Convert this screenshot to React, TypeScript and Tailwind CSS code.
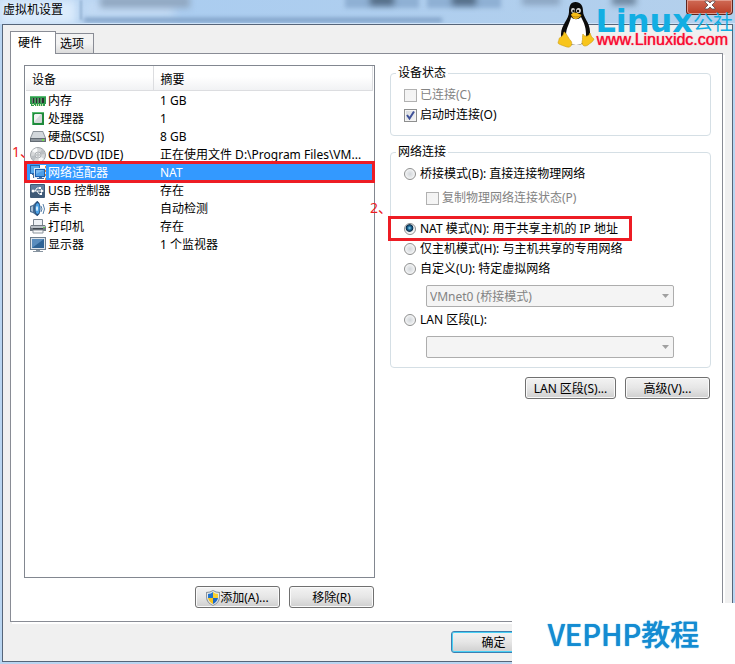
import React from 'react';

const RAM = () => (
  <svg viewBox="0 0 16 16" className="h-4 w-4">
    <path d="M0 3h16v8h-1v2H5v-1H4v1H1v-2H0z" fill="#2f9a4d" />
    <path d="M0 3h16v1H0z" fill="#59bd72" />
    <path d="M2 5h2v5H2zM5 5h2v5H5zM8 5h2v5H8zM11 5h3v5h-3z" fill="#26352c" />
    <path d="M2 5h1v5H2zM5 5h1v5H5zM8 5h1v5H8zM11 5h1v5h-1z" fill="#6d7d73" />
    <path d="M2 11h2v1H2zM6 11h1v2H6zM8 11h1v2H8zM10 11h1v2h-1zM12 11h1v2h-1z" fill="#c9e7a8" />
  </svg>
);

const Cpu = () => (
  <svg viewBox="0 0 16 16" className="h-4 w-4">
    <rect x="2" y="1" width="12" height="13" fill="#1f8a3c" />
    <path d="M2 1h12v1H3v12H2z" fill="#58bd70" />
    <path d="M5 3h6l1 1v7l-1 1H5l-1-1V4z" fill="#f1f2f2" />
    <path d="M11 3l1 1v7l-1 1H5l-1-1z" fill="#d5d8da" />
  </svg>
);

const Disk = () => (
  <svg viewBox="0 0 16 16" className="h-4 w-4">
    <path d="M3 2h10l3 7v4H0V9z" fill="#8b9299" />
    <path d="M3.500 3h9L15 9H1z" fill="#d3d8dc" />
    <path d="M0 9h16v4H0z" fill="#646c74" />
    <path d="M1 10h14v2H1z" fill="#8d959c" />
    <rect x="12" y="10" width="2" height="2" fill="#72e04a" />
  </svg>
);

const Disc = () => (
  <svg viewBox="0 0 16 16" className="h-4 w-4">
    <circle cx="8" cy="8" r="7.500" fill="#d6d8da" stroke="#a1a5a9" />
    <path d="M8 8L2 4a7 7 0 0 1 5-3zM8 8l6 4a7 7 0 0 1-5 3z" fill="#f8f9fa" />
    <path d="M8 8L1 9a7 7 0 0 0 3 4.500zM8 8l7-1a7 7 0 0 0-3-4.500z" fill="#bbbfc3" />
    <circle cx="8" cy="8" r="3" fill="#e8eaec" stroke="#adb1b5" />
    <circle cx="8" cy="8" r="1.200" fill="#fff" stroke="#777d83" strokeWidth=".6" />
  </svg>
);

const Net = () => (
  <svg viewBox="0 0 16 16" className="h-4 w-4">
    <path d="M0 0h16v16H0z" fill="#fff" />
    <path d="M0 0h10v9H0z" fill="#2468b0" />
    <path d="M1 1h8v7H1z" fill="#5aaaea" />
    <path d="M2 9h2v3h2v1H3v-3H2z" fill="#4d6f94" />
    <path d="M4 3h12v10H4z" fill="#dbe9f6" />
    <path d="M5 4h10v8H5z" fill="#1b5fae" />
    <path d="M6 5h8v6H6z" fill="#4f9fe6" />
    <path d="M6 5h8L6 9z" fill="#76b9f0" />
    <path d="M9 12h3v1h2v1H7v-1h2z" fill="#3c6ea5" />
    <path d="M15 1h1v2h-1zM15 5h1v2h-1zM15 9h1v2h-1zM15 13h1v2h-1z" fill="#e58a3a" />
  </svg>
);

const Usb = () => (
  <svg viewBox="0 0 16 16" className="h-4 w-4">
    <rect x="0" y="1" width="15" height="14" rx="1" fill="#3f5a77" />
    <path d="M1 2h13v5H1z" fill="#5f7d9c" />
    <g stroke="#fff" fill="none">
      <path d="M3 8h9M5 8l2-3h3M7 8l2 3h2" />
    </g>
    <path d="M11 6l3 2-3 2zM9 4h2v2H9zM10 10h2v2h-2z" fill="#fff" />
    <circle cx="3" cy="8" r="1.500" fill="#fff" />
  </svg>
);

const Sound = () => (
  <svg viewBox="0 0 16 16" className="h-4 w-4">
    <path d="M0 5l3-1 4-4h1v15H7l-4-3-3-1z" fill="#4a6d92" />
    <path d="M1 6l2-1v6l-2-1z" fill="#a9bfd4" />
    <ellipse cx="7.500" cy="7.500" rx="3" ry="7" fill="#274f7c" />
    <ellipse cx="7.500" cy="7.500" rx="2.200" ry="5.500" fill="#4aa0e4" />
    <ellipse cx="7" cy="7.500" rx="1" ry="2.500" fill="#d8efff" />
    <path d="M11 5q2 3 0 6M13 3q3 5 0 10" stroke="#567fa9" fill="none" />
  </svg>
);

const Printer = () => (
  <svg viewBox="0 0 16 16" className="h-4 w-4">
    <path d="M3.500.5h9v6h-9z" fill="#eef2f6" stroke="#7c8791" />
    <path d="M1 6h14l1 2v4H0V8z" fill="#717a83" />
    <path d="M1 7h14v2H1z" fill="#b9c0c7" />
    <path d="M3 9h10v2H3z" fill="#3e464e" />
    <path d="M3 11h10v3H3z" fill="#f8f9fa" stroke="#8b949c" />
    <rect x="13" y="8" width="2" height="1" fill="#5fd04a" />
  </svg>
);

const Display = () => (
  <svg viewBox="0 0 16 16" className="h-4 w-4">
    <path d="M0 0h16v13H0z" fill="#70808f" />
    <path d="M1 1h14v11H1z" fill="#dfe6ec" />
    <path d="M2 2h12v9H2z" fill="#2f6496" />
    <path d="M2 2h12L2 11z" fill="#5a8dbd" />
    <path d="M6 13h4v1h3v1H3v-1h3z" fill="#8794a0" />
  </svg>
);

const Shield = () => (
  <svg viewBox="0 0 14 16" className="h-4 w-[14px]">
    <path d="M7 0q3 2 7 2v5q0 6-7 9Q0 13 0 7V2q4 0 7-2z" fill="#8d969d" />
    <path d="M7 1q3 2 6 2v4q0 5-6 8-6-3-6-8V3q3 0 6-2z" fill="#e6eaed" />
    <path d="M7 2v6H2V4q3 0 5-2z" fill="#2274cf" />
    <path d="M7 2q2 2 5 2v4H7z" fill="#fbd12f" />
    <path d="M2 8h5v6Q3 12 2 8z" fill="#f7c41d" />
    <path d="M7 8h5q-1 4-5 6z" fill="#1d68c4" />
  </svg>
);

const Tux = () => (
  <svg viewBox="0 0 38 46" className="h-[46px] w-[38px]">
    <path d="M18.500 0c5 0 7.500 3.500 7.500 9 0 7 7 11 7 21 0 8-4 13-15 13S4 40 4 32c0-9 8-15 8-22 0-6 1.500-10 6.500-10z" fill="#0b0b0b" />
    <path d="M14 15c3 3 7 3 10 0 2 4 5 9 5 17 0 7-3 11-10 11-6 0-10-3-10-10 0-7 4-12 5-18z" fill="#fff" />
    <ellipse cx="16" cy="8.500" rx="2" ry="2.400" fill="#d9d9d9" />
    <ellipse cx="21.500" cy="8.500" rx="2.400" ry="2.600" fill="#d9d9d9" />
    <circle cx="16.500" cy="9" r="1.200" fill="#111" />
    <circle cx="21" cy="9" r="1.200" fill="#111" />
    <path d="M14 12.500c2-2.500 4-2.500 6-1.500l4.500 2c-1 2-4 4-6 4s-3.500-2-4.500-4.500z" fill="#f6bd17" />
    <path d="M14 13.500c3 2 6 2 10 0" stroke="#a86f08" strokeWidth=".7" fill="none" />
    <path d="M7 30c2 0 4 6 7 9 2 3 0 7-4 6-3-1-6-2-8-3s0-3 0-5 4-1 5-7z" fill="#f8c51c" stroke="#c99a12" strokeWidth=".6" />
    <path d="M26 32c1 3 6 3 7-1 1 3 2 5 4 6-1 3-4 4-6 6-3 2-6 1-6-3 1-3 0-6 1-8z" fill="#f8c51c" stroke="#c99a12" strokeWidth=".6" />
  </svg>
);

const devices = [
  { icon: <RAM />, name: '内存', info: '1 GB' },
  { icon: <Cpu />, name: '处理器', info: '1' },
  { icon: <Disk />, name: '硬盘(SCSI)', info: '8 GB' },
  { icon: <Disc />, name: 'CD/DVD (IDE)', info: '正在使用文件 D:\\Program Files\\VM...' },
  { icon: <Net />, name: '网络适配器', info: 'NAT', selected: true },
  { icon: <Usb />, name: 'USB 控制器', info: '存在' },
  { icon: <Sound />, name: '声卡', info: '自动检测' },
  { icon: <Printer />, name: '打印机', info: '存在' },
  { icon: <Display />, name: '显示器', info: '1 个监视器' },
];

function Button({ children, width = 'w-[85px]', primary = false }: { children: React.ReactNode; width?: string; primary?: boolean }) {
  const edge = primary
    ? 'border-[#3c7fb1] shadow-[inset_0_0_0_1px_#48d0f5]'
    : 'border-[#707070] shadow-[inset_0_0_0_1px_#fafafa]';
  return (
    <button
      type="button"
      className={`flex h-[22px] items-center justify-center rounded-[3px] border bg-linear-to-b from-[#f3f3f3] via-[#e6e6e6] to-[#cfcfcf] pt-px whitespace-nowrap ${edge} ${width}`}
    >
      {children}
    </button>
  );
}

function Radio({ label, checked = false }: { label: string; checked?: boolean }) {
  return (
    <label className="flex h-5 items-center gap-1 whitespace-nowrap">
      <input
        type="radio"
        name="network"
        defaultChecked={checked}
        className="h-3 w-3 shrink-0 appearance-none rounded-full border border-[#8e8f8f] bg-[radial-gradient(circle,#d2d6da_0,#e9ebed_50%,#fafafa_75%)] checked:bg-[radial-gradient(circle_at_45%_40%,#8fd8f5_0,#1f6d9c_22%,#0b2c48_42%,#e6eaed_52%,#fff_75%)]"
      />
      {label}
    </label>
  );
}

function Check({ label, checked = false, disabled = false }: { label: string; checked?: boolean; disabled?: boolean }) {
  return (
    <label className={`flex h-5 items-center gap-[3px] whitespace-nowrap ${disabled ? 'text-[#838383]' : ''}`}>
      <span className="grid h-[13px] w-[13px] shrink-0">
        <input
          type="checkbox"
          defaultChecked={checked}
          disabled={disabled}
          className="peer col-start-1 row-start-1 appearance-none border border-[#8e8f8f] bg-linear-to-br from-[#d5d9de] to-[#f6f6f6] shadow-[inset_0_0_0_1px_#f4f4f4] disabled:border-[#b1b1b1] disabled:from-[#f2f2f2]"
        />
        <svg viewBox="0 0 13 13" className="pointer-events-none invisible col-start-1 row-start-1 peer-checked:visible">
          <path d="M3 6l2.500 3.500L10 2.500" fill="none" stroke="#3e5199" strokeWidth="2" />
        </svg>
      </span>
      {label}
    </label>
  );
}

function Combo({ label, value }: { label: string; value: string }) {
  return (
    <div className="mr-[30px] ml-[22px] grid items-center">
      <select
        aria-label={label}
        disabled
        className="col-start-1 row-start-1 h-[22px] w-full appearance-none rounded-[2px] border border-[#adadad] bg-[#f4f4f4] px-[3px] pt-px text-[#838383] opacity-100"
      >
        <option>{value}</option>
      </select>
      <svg viewBox="0 0 7 4" className="pointer-events-none col-start-1 row-start-1 mr-[5px] h-1 w-[7px] justify-self-end">
        <path d="M0 0h7L3.500 4z" fill="#a0a0a0" />
      </svg>
    </div>
  );
}

export default function App() {
  return (
    <div className="relative overflow-hidden bg-[#b9d5f1] px-[2px] pb-[2px] font-['Noto_Sans','Noto_Sans_CJK_SC',sans-serif] text-[12px] leading-4 text-black">
      <header className="relative -mx-[2px] h-6 overflow-hidden bg-linear-to-r from-[#c3daf3] via-[#abcdf0] via-25% to-[#b4d0ec] px-[3px]">
        <div aria-hidden="true">
          <div className="absolute top-0 left-0 h-6 w-[76px] bg-[#dcecfc] blur-[5px]" />
          <div className="absolute top-0 left-[84px] h-[18px] w-[90px] bg-[#c2daf4] blur-[5px]" />
          <div className="absolute top-0 left-[80px] h-5 w-[2px] bg-[#94b2d3] blur-[1px]" />
          <div className="absolute top-[18px] left-[84px] h-1 w-[358px] bg-[#7a9bc1] blur-[2px]" />
          <div className="absolute -top-1 left-[100px] h-3 w-[90px] bg-[#91a8c2] blur-[3px]" />
          <div className="absolute -top-1 left-[345px] h-3 w-[74px] bg-[#8fb0d4] blur-[2px]" />
          <div className="absolute -top-1 left-[370px] h-[9px] w-6 bg-[#4f6780] blur-[3px]" />
          <div className="absolute -top-1 left-[427px] h-3 w-[74px] bg-[#8fb0d4] blur-[2px]" />
          <div className="absolute -top-1 left-[452px] h-[9px] w-6 bg-[#4f6780] blur-[3px]" />
          <div className="absolute -top-1 left-[522px] h-[9px] w-[38px] bg-[#8aa3bf] blur-[3px]" />
          <div className="absolute -top-1 left-[612px] h-[9px] w-6 bg-[#6b839c] blur-[3px]" />
          <div className="absolute bottom-0 left-0 h-px w-full bg-[#cfe3f8]" />
        </div>
        <h1 className="relative pt-[2px]">虚拟机设置</h1>
        <button
          type="button"
          aria-label="关闭"
          className="absolute top-0 right-[2px] flex h-[15px] w-[47px] items-center justify-center rounded-b-[4px] border border-t-0 border-[#5c2620] bg-linear-to-b from-[#cf6a55] to-[#b93a22] shadow-[inset_0_0_0_1px_#e29a8b]"
        >
          <svg viewBox="0 0 12 10" className="mb-1 h-[10px] w-3">
            <path d="M1 1h3l2 2 2-2h3v1L8 5l3 3v1H8L6 7 4 9H1V8l3-3-3-3z" fill="#fff" stroke="#5c4a4a" strokeWidth=".8" />
          </svg>
        </button>
      </header>

      <main className="border border-[#566579] bg-[#f0f0f0] pt-[6px] pr-[9px] pl-[7px]">
        <div role="tablist" className="flex items-end">
          <button type="button" role="tab" aria-selected="true" className="relative z-10 -mb-px h-[23px] w-[46px] border border-b-0 border-[#898c95] bg-white pl-[7px] text-left">
            硬件
          </button>
          <button type="button" role="tab" aria-selected="false" className="-ml-px h-[20px] w-[39px] border border-b-0 border-[#898c95] bg-linear-to-b from-[#f3f3f3] from-50% to-[#dcdcdc] pt-px pl-1 text-left">
            选项
          </button>
        </div>

        <div role="tabpanel" className="grid grid-cols-[351fr_321fr] gap-x-[15px] border border-[#898c95] bg-white pt-[11px] pr-[11px] pb-[13px] pl-[13px] shadow-[2px_2px_0_#fff]">
          <section>
            <div className="min-h-[513px] border border-[#828790] p-px pt-0">
              <table className="w-full table-fixed border-collapse text-left">
                <thead>
                  <tr className="h-6 bg-linear-to-b from-white from-45% to-[#f1f2f4]">
                    <th className="w-[127px] border-r border-b border-[#dcdde0] pt-1 pl-[6px] font-normal">设备</th>
                    <th className="border-r border-b border-[#dcdde0] pt-1 pl-[7px] font-normal">摘要</th>
                  </tr>
                </thead>
                <tbody>
                  <tr aria-hidden="true" className="h-[2px]"><td colSpan={2} /></tr>
                  {devices.map((d) => (
                    <tr key={d.name} aria-selected={d.selected} className="h-[18px] aria-selected:bg-[#3399ff] aria-selected:text-white">
                      <td className="p-0 pl-1">
                        <span className="flex items-center gap-[2px] whitespace-nowrap">{d.icon}{d.name}</span>
                      </td>
                      <td className="truncate p-0 pl-[7px]">{d.info}</td>
                    </tr>
                  ))}
                </tbody>
              </table>
            </div>
            <div className="mt-2 flex justify-end gap-[9px] pr-px">
              <Button><Shield />添加(A)...</Button>
              <Button>移除(R)</Button>
            </div>
          </section>

          <section>
            <fieldset className="h-[71px] rounded-[4px] border border-[#d5dfe5] px-[13px]">
              <legend className="-ml-[8px] px-[2px]">设备状态</legend>
              <div className="mt-1">
                <Check label="已连接(C)" disabled />
                <Check label="启动时连接(O)" checked />
              </div>
            </fieldset>

            <fieldset className="mt-2 rounded-[4px] border border-[#d5dfe5] pr-[6px] pb-[9px] pl-[13px]">
              <legend className="-ml-[8px] px-[2px]">网络连接</legend>
              <div className="mt-1">
                <Radio label="桥接模式(B): 直接连接物理网络" />
                <div className="mt-1 ml-[22px]">
                  <Check label="复制物理网络连接状态(P)" disabled />
                </div>
              </div>
              <div className="mt-[11px] mb-[6px]">
                <Radio label="NAT 模式(N): 用于共享主机的 IP 地址" checked />
                <Radio label="仅主机模式(H): 与主机共享的专用网络" />
                <Radio label="自定义(U): 特定虚拟网络" />
              </div>
              <Combo label="特定虚拟网络" value="VMnet0 (桥接模式)" />
              <div className="mt-[3px] mb-[6px]">
                <Radio label="LAN 区段(L):" />
              </div>
              <Combo label="LAN 区段" value="" />
            </fieldset>

            <div className="mt-[9px] flex justify-end gap-[9px] pr-px">
              <Button width="w-[91px]">LAN 区段(S)...</Button>
              <Button>高级(V)...</Button>
            </div>
          </section>
        </div>

        <footer className="mt-[9px] flex justify-end pr-[187px] pb-2">
          <Button primary>确定</Button>
        </footer>
      </main>

      <div className="pointer-events-none absolute top-[161px] left-6 h-[22px] w-[351px] border-3 border-[#ed1c24]" />
      <div className="pointer-events-none absolute top-[216px] left-[388px] h-[25px] w-[244px] border-3 border-[#ed1c24]" />
      <span className="absolute top-[144px] left-3 text-[14px] text-[#ed1c24]">1、</span>
      <span className="absolute top-[200px] left-[370px] text-[14px] text-[#ed1c24]">2、</span>

      <div className="absolute top-[2px] right-[2px] flex">
        <Tux />
        <div className="pt-[7px] whitespace-nowrap">
          <div className="flex h-6 items-end text-[#12aee3]">
            <span className="font-['DejaVu_Sans'] text-[32px] leading-6 font-bold">Linux</span>
            <span className="text-[20px] leading-5">公社</span>
          </div>
          <div className="pl-px font-['Liberation_Sans'] text-[16px] leading-[14px] text-[#fa0a32] [text-shadow:0_0_1px_#fa0a32]">www.Linuxidc.com</div>
        </div>
      </div>

      <div className="absolute right-0 bottom-0 flex h-[61px] w-[223px] items-center justify-center bg-white pb-[2px] font-['Noto_Sans_CJK_SC'] text-[29px] leading-8 font-medium text-[#148cd2] [text-shadow:0_0_1px_#148cd2]">
        VEPHP教程
      </div>
    </div>
  );
}
